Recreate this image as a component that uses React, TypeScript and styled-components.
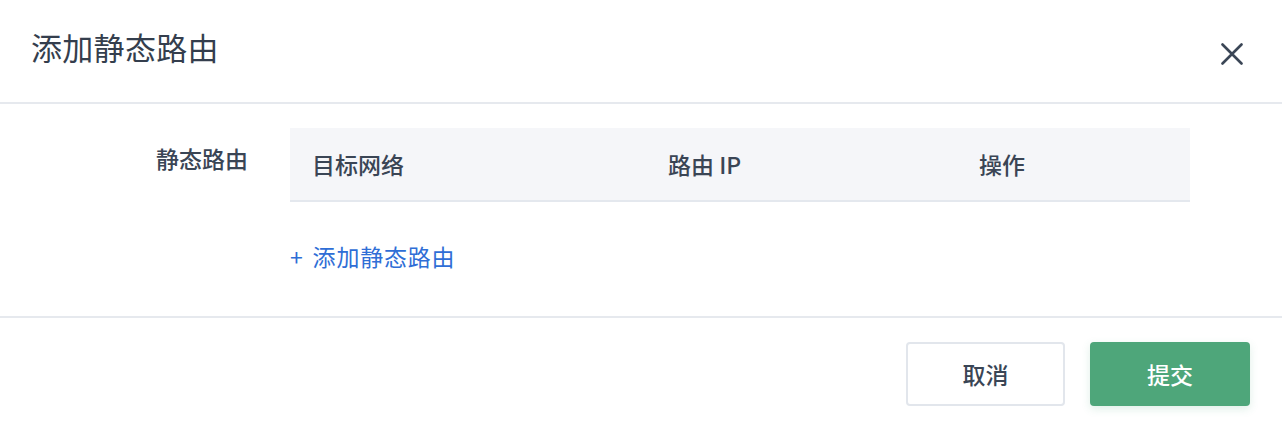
import React from "react";
import styled, { createGlobalStyle } from "styled-components";

const Global = createGlobalStyle`
  html, body { margin: 0; padding: 0; background: #ffffff; }
  body {
    font-family: "Noto Sans CJK SC", "Noto Sans", "Liberation Sans", sans-serif;
    color: #3a4555;
    -webkit-font-smoothing: antialiased;
  }
  * { box-sizing: border-box; }
`;

const Dialog = styled.div`
  width: 1282px;
  height: 426px;
  background: #fff;
  display: flex;
  flex-direction: column;
`;

const Header = styled.div`
  height: 104px;
  flex: none;
  display: flex;
  align-items: center;
  justify-content: space-between;
  padding: 0 38px 8px 31px;
  border-bottom: 2px solid #e6e9ee;
`;

const Title = styled.h1`
  margin: 0;
  font-size: 31px;
  line-height: 40px;
  font-weight: 400;
  letter-spacing: 0.3px;
  color: #343e4d;
`;

const CloseButton = styled.button`
  width: 24px;
  height: 24px;
  padding: 0;
  border: none;
  background: transparent;
  display: flex;
  align-items: center;
  justify-content: center;
  cursor: pointer;
  margin-top: 13px;
`;

const Body = styled.div`
  height: 214px;
  flex: none;
  padding-top: 24px;
  border-bottom: 2px solid #e6e9ee;
`;

const FormRow = styled.div`
  display: flex;
  align-items: flex-start;
`;

const Label = styled.div`
  width: 290px;
  flex: none;
  padding: 13px 42px 0 0;
  text-align: right;
  font-size: 23px;
  line-height: 34px;
  font-weight: 500;
  color: #3a4555;
`;

const Field = styled.div`
  width: 900px;
  display: flex;
  flex-direction: column;
`;

const TableHead = styled.div`
  display: grid;
  grid-template-columns: 356px 311px 1fr;
  height: 74px;
  background: #f5f6f9;
  border-bottom: 2px solid #e4e8ee;
`;

const HeadCell = styled.div`
  display: flex;
  align-items: center;
  padding-left: 22px;
  font-size: 23px;
  font-weight: 500;
  color: #3a4555;
`;

const AddLink = styled.a`
  margin-top: 37px;
  align-self: flex-start;
  display: flex;
  align-items: center;
  font-size: 23px;
  line-height: 34px;
  letter-spacing: 0.8px;
  color: #2f6ed6;
  text-decoration: none;
  cursor: pointer;
`;

const PlusMark = styled.span`
  margin-right: 9px;
`;

const Footer = styled.div`
  flex: 1;
  display: flex;
  justify-content: flex-end;
  align-items: flex-start;
  gap: 25px;
  padding: 24px 32px 0 0;
`;

const Button = styled.button<{ $primary?: boolean }>`
  width: ${(p) => (p.$primary ? "160px" : "159px")};
  height: 64px;
  border-radius: 4px;
  font-family: inherit;
  font-size: 23px;
  font-weight: 500;
  cursor: pointer;
  border: ${(p) => (p.$primary ? "none" : "2px solid #e2e6ec")};
  background: ${(p) => (p.$primary ? "#4ea67a" : "#ffffff")};
  color: ${(p) => (p.$primary ? "#ffffff" : "#3a4555")};
  box-shadow: ${(p) =>
    p.$primary ? "0 3px 8px rgba(78, 166, 122, 0.18)" : "none"};
`;

export default function App() {
  return (
    <>
      <Global />
      <Dialog>
        <Header>
          <Title>添加静态路由</Title>
          <CloseButton aria-label="close">
            <svg width="22" height="22" viewBox="0 0 22 22">
              <path
                d="M1.5 1.5 L20.5 20.5 M20.5 1.5 L1.5 20.5"
                stroke="#3b4656"
                strokeWidth="2.6"
                strokeLinecap="round"
                fill="none"
              />
            </svg>
          </CloseButton>
        </Header>
        <Body>
          <FormRow>
            <Label>静态路由</Label>
            <Field>
              <TableHead>
                <HeadCell>目标网络</HeadCell>
                <HeadCell>路由 IP</HeadCell>
                <HeadCell>操作</HeadCell>
              </TableHead>
              <AddLink>
                <PlusMark>+</PlusMark>
                <span>添加静态路由</span>
              </AddLink>
            </Field>
          </FormRow>
        </Body>
        <Footer>
          <Button>取消</Button>
          <Button $primary>提交</Button>
        </Footer>
      </Dialog>
    </>
  );
}
